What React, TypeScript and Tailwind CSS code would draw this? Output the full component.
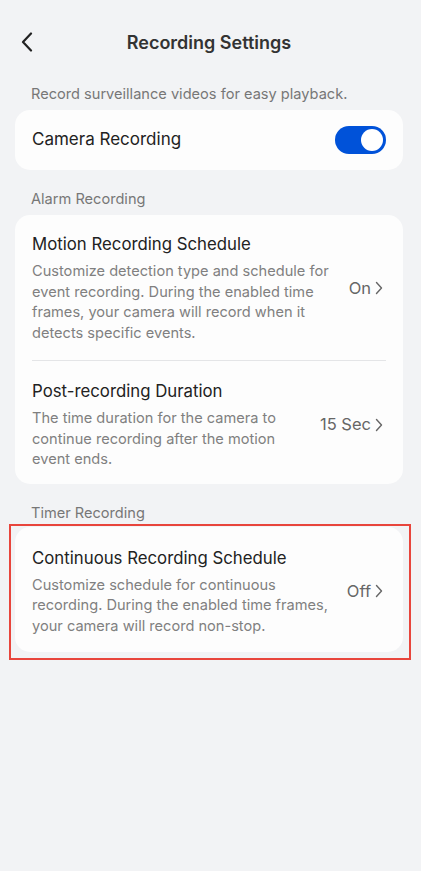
const font = { fontFamily: "Inter, 'Noto Sans', sans-serif" };

const Chevron = () => (
  <svg width="8" height="14" viewBox="0 0 8 14" fill="none" className="ml-[4px]">
    <path d="M1.5 1.5 L6.5 7 L1.5 12.5" stroke="#666" strokeWidth="1.4" strokeLinecap="round" strokeLinejoin="round" />
  </svg>
);

type RowProps = { title: string; desc: string; value: string };

const Row = ({ title, desc, value }: RowProps) => (
  <div className="flex items-center gap-[14px]">
    <div className="min-w-0 flex-1">
      <div className="text-[16.8px] leading-[22px] text-[#222]">{title}</div>
      <p className="mt-[6px] max-w-[302px] text-[14.6px] leading-[20.5px] text-[#808080]">{desc}</p>
    </div>
    <div className="mr-[3px] flex shrink-0 items-center whitespace-nowrap text-[16.5px] text-[#666]">
      {value}
      <Chevron />
    </div>
  </div>
);

export default function App() {
  return (
    <div className="min-h-[871px] w-[421px] bg-[#f2f3f5]" style={font}>
      <header className="relative flex h-[84px] items-center justify-center pt-[1px]">
        <button className="absolute left-[19px] top-[30px] p-[2px]">
          <svg width="12" height="20" viewBox="0 0 12 20" fill="none">
            <path d="M10 1.5 L2 10 L10 18.5" stroke="#222" strokeWidth="2.2" strokeLinecap="round" strokeLinejoin="round" />
          </svg>
        </button>
        <h1 className="-ml-[3px] text-[18px] font-semibold text-[#333]">Recording Settings</h1>
      </header>

      <div className="px-[15px] pr-[18px]">
        <p className="px-[16px] text-[14.6px] leading-[20px] text-[#777]">
          Record surveillance videos for easy playback.
        </p>
        <div className="mt-[6px] flex h-[60px] items-center justify-between rounded-[15px] bg-[#fdfdfd] pl-[17px] pr-[17px]">
          <span className="text-[17px] text-[#222]">Camera Recording</span>
          <div className="flex h-[28px] w-[51px] items-center justify-end rounded-full bg-[#0052d9] pr-[3px]">
            <div className="h-[22px] w-[22px] rounded-full bg-white" />
          </div>
        </div>

        <p className="mt-[19px] px-[16px] text-[14.6px] leading-[20px] text-[#777]">Alarm Recording</p>
        <div className="mt-[6px] rounded-[15px] bg-[#fdfdfd] px-[17px]">
          <div className="border-b border-[#e4e5e7] pb-[17px] pt-[18px]">
            <Row
              title="Motion Recording Schedule"
              desc="Customize detection type and schedule for event recording. During the enabled time frames, your camera will record when it detects specific events."
              value="On"
            />
          </div>
          <div className="pb-[14px] pt-[19px]">
            <Row
              title="Post-recording Duration"
              desc="The time duration for the camera to continue recording after the motion event ends."
              value="15 Sec"
            />
          </div>
        </div>

        <p className="mt-[19px] px-[16px] text-[14.6px] leading-[20px] text-[#777]">Timer Recording</p>
        <div className="-ml-[6px] -mr-[8px] mt-[1px] border-2 border-[#e8453c] pb-[6px] pl-[4px] pr-[6px] pt-[1px]">
          <div className="rounded-[15px] bg-[#fdfdfd] px-[17px] pb-[16px] pt-[20px]">
            <Row
              title="Continuous Recording Schedule"
              desc="Customize schedule for continuous recording. During the enabled time frames, your camera will record non-stop."
              value="Off"
            />
          </div>
        </div>
      </div>
    </div>
  );
}
